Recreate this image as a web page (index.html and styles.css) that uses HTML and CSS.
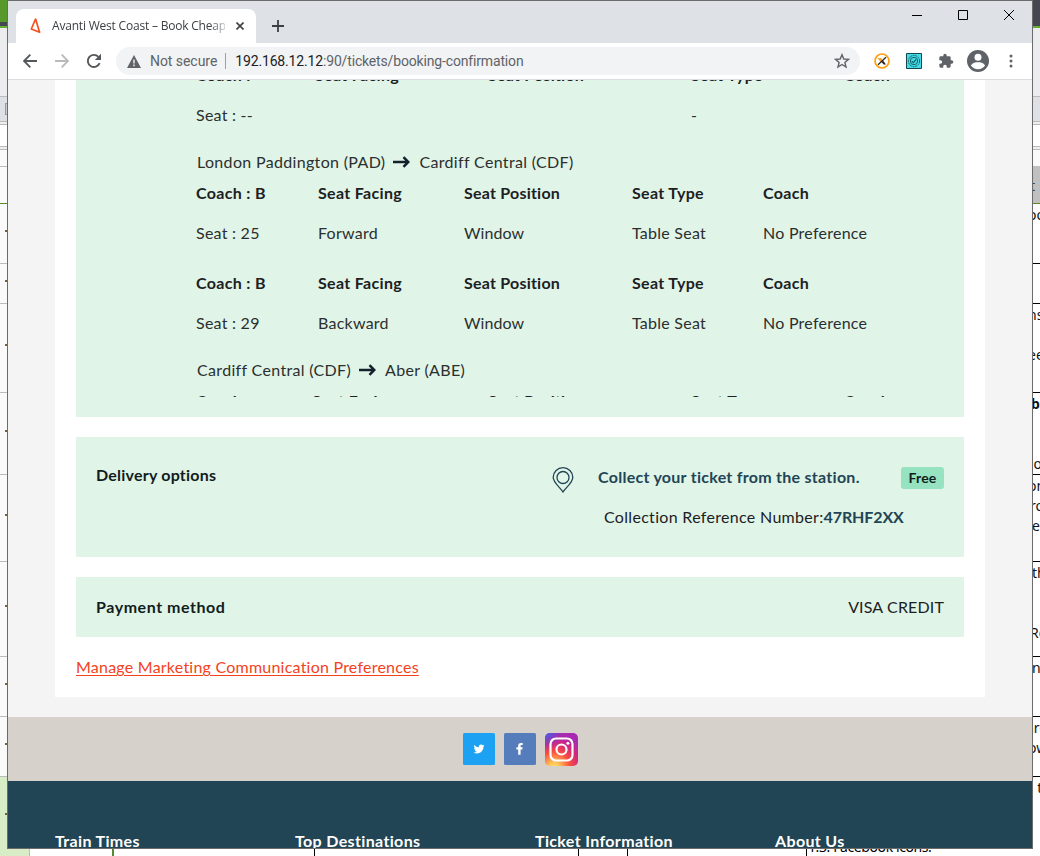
FILE: index.html
```
<!DOCTYPE html>
<html lang="en">
<head>
<meta charset="utf-8">
<title>Avanti West Coast – Booking confirmation</title>
<link rel="stylesheet" href="styles.css">
</head>
<body>
<div class="desktop">
  <div class="sheet">
    <div class="edge edge-left">
      <div class="ribbon"></div><div class="bar-dark"></div><div class="bar-green"></div><div class="ribbon-body"></div>
      <div class="formula"><i></i></div><div class="gap"></div><div class="white"></div><div class="gap2"></div><div class="colhead"></div>
      <div class="cell r1"></div><div class="cell r2"><b></b></div><div class="cell r3"><b></b></div><div class="cell r4"><b></b></div><div class="cell r5"><b></b></div><div class="cell r6"><b></b></div><div class="cell r7"><b></b></div><div class="cell r8"><b></b></div><div class="cell r9"><b></b></div><div class="cell r10"><b></b></div>
    </div>
    <div class="edge edge-right">
      <div class="ribbon"></div><div class="bar-dark"></div><div class="bar-green"></div><div class="ribbon-body"></div>
      <div class="formula"></div><div class="gap"></div><div class="white"></div><div class="gap2"></div><div class="colhead"></div>
      <div class="cell r1"><p>t</p></div>
      <div class="cell r2"><p>oo</p></div>
      <div class="cell r3"></div>
      <div class="cell r4"><p>ns</p><p></p><p>ee</p></div>
      <div class="cell r5"><p class="strong">ba</p><p></p><p></p><p class="io">io</p></div>
      <div class="cell r6"><p>on</p><p class="ro">ro</p><p class="in">e</p></div>
      <div class="cell r7"><p class="th">th</p><p></p><p></p><p class="re">Re</p></div>
      <div class="cell r8"><p class="in">n</p></div>
      <div class="cell r9"><p class="are">are</p><p>ow</p></div>
      <div class="cell r10"><p class="nt">n t</p></div>
    </div>
    <div class="bottom"><span class="c1"></span><span class="c2"></span><span class="c3"></span><span class="c4"></span><span class="c5"></span><span class="c6">1.3. Facebook icons.</span></div>
  </div>

  <div class="window">
    <div class="tabs">
      <div class="tab">
        <svg class="fav" viewBox="0 0 16 18"><path d="M6.6 2 2.3 12 10.6 15.2Z" fill="none" stroke="#f4511e" stroke-width="1.7" stroke-linejoin="round"/></svg>
        <span class="tab-title">Avanti West Coast – Book Cheap</span>
        <svg class="tab-x" viewBox="0 0 8 8"><path d="M.5.5 7.5 7.5M7.5.5.5 7.5" stroke="#3c4043" stroke-width="1.6"/></svg>
      </div>
      <svg class="plus" viewBox="0 0 12 12"><path d="M6 0V12M0 6H12" stroke="#3c4043" stroke-width="1.8"/></svg>
      <div class="controls">
        <svg width="10" height="11" viewBox="0 0 10 11"><path d="M0 5.5H10" stroke="#000"/></svg>
        <svg width="10" height="10" viewBox="0 0 10 10"><path d="M.5.5H9.5V9.5H.5Z" fill="none" stroke="#000"/></svg>
        <svg width="10" height="10" viewBox="0 0 10 10"><path d="M0 0 10 10M10 0 0 10" stroke="#000"/></svg>
      </div>
    </div>
    <div class="toolbar">
      <svg class="nav" viewBox="0 0 14 14"><path d="M14 7H1M7.3.7 1 7 7.3 13.3" fill="none" stroke="#54575b" stroke-width="1.9"/></svg>
      <svg class="nav" viewBox="0 0 14 14"><path d="M0 7H13M6.7.7 13 7 6.7 13.3" fill="none" stroke="#b8babc" stroke-width="1.9"/></svg>
      <svg class="nav reload" viewBox="0 0 16 16"><path d="M13.6 10.2A6.1 6.1 0 1 1 12.4 3.8" fill="none" stroke="#54575b" stroke-width="1.9"/><path d="M15 .8V7H8.8Z" fill="#54575b"/></svg>
      <div class="omnibox">
        <svg class="warn" viewBox="0 0 14 13"><path d="M7 0 14 13H0Z" fill="#5f6368"/><path d="M7 4.5V8.5M7 9.6V11.2" stroke="#f1f3f4" stroke-width="1.4"/></svg>
        <span class="secure">Not secure</span><span class="sep"></span><span class="url">192.168.12.12<em>:90/tickets/booking-confirmation</em></span>
        <svg class="star" viewBox="0 0 16 16"><path d="M8 1.7 9.8 6 14.4 6.4 10.9 9.4 12 14 8 11.5 4 14 5.1 9.4 1.6 6.4 6.2 6Z" fill="none" stroke="#5f6368" stroke-width="1.4"/></svg>
      </div>
      <svg class="ext e1" viewBox="0 0 16 16"><circle cx="8" cy="8" r="7" fill="#fff" stroke="#ff9f13" stroke-width="1.7"/><path d="M3.6 5H7.2L8.600 7.2 7 9.500 5.800 8Z" fill="#ffa01c"/><path d="M4 11.700 12 4.300" stroke="#222" stroke-width="1.200"/><path d="M7.500 9 9 7.600 12 11.500H9.700Z" fill="#222"/></svg>
      <svg class="ext e2" viewBox="0 0 16 16"><path d="M.5.5H15.5V15.5H.5Z" fill="#43dbe5" stroke="#17454b"/><g fill="none" stroke="#17636b"><circle cx="8" cy="8" r="5.6" stroke-dasharray="2 .7"/><circle cx="8" cy="8" r="3.7"/><path d="M5.8 8.2 7.3 9.7 10.2 6.5" stroke-width="1.2"/></g></svg>
      <svg class="ext e3" viewBox="0 0 24 24"><path fill="#5f6368" d="M20.5 11H19V7a2 2 0 0 0-2-2h-4V3.500a2.500 2.500 0 0 0-5 0V5H4a2 2 0 0 0-2 2v3.800h1.500a2.700 2.700 0 0 1 0 5.400H2V20a2 2 0 0 0 2 2h3.800v-1.500a2.700 2.700 0 0 1 5.400 0V22H17a2 2 0 0 0 2-2v-4h1.500a2.500 2.500 0 0 0 0-5Z"/></svg>
      <svg class="user" viewBox="0 0 22 22"><circle cx="11" cy="11" r="11" fill="#5f6368"/><circle cx="11" cy="7.200" r="3.500" fill="#fff"/><path d="M3.900 15.600C5.500 12.800 8.500 12.300 11 12.300S16.500 12.800 18.100 15.600A8.600 8.600 0 0 1 3.900 15.600Z" fill="#fff"/></svg>
      <svg class="dots" viewBox="0 0 4 14"><g fill="#5f6368"><circle cx="2" cy="2" r="1.500"/><circle cx="2" cy="7" r="1.500"/><circle cx="2" cy="12" r="1.500"/></g></svg>
    </div>

    <div class="page">
      <main class="container">
        <section class="card seats">
          <div class="scroller">
            <div class="grid wide first"><b>Coach :</b><b>Seat Facing</b><b>Seat Position</b><b>Seat Type</b><b>Coach</b><span>Seat : --</span><span></span><span></span><span>-</span><span></span></div>
            <h3>London Paddington (PAD)<svg viewBox="0 0 17 12"><path d="M0 6H15M10.500 1.200 15.300 6 10.500 10.800" fill="none" stroke="#14202c" stroke-width="2.500"/></svg>Cardiff Central (CDF)</h3>
            <div class="grid"><b>Coach : B</b><b>Seat Facing</b><b>Seat Position</b><b>Seat Type</b><b>Coach</b><span>Seat : 25</span><span>Forward</span><span>Window</span><span>Table Seat</span><span>No Preference</span></div>
            <div class="grid next"><b>Coach : B</b><b>Seat Facing</b><b>Seat Position</b><b>Seat Type</b><b>Coach</b><span>Seat : 29</span><span>Backward</span><span>Window</span><span>Table Seat</span><span>No Preference</span></div>
            <h3>Cardiff Central (CDF)<svg viewBox="0 0 17 12"><path d="M0 6H15M10.500 1.200 15.300 6 10.500 10.800" fill="none" stroke="#14202c" stroke-width="2.500"/></svg>Aber (ABE)</h3>
            <div class="grid wide last"><b>Coach :</b><b>Seat Facing</b><b>Seat Position</b><b>Seat Type</b><b>Coach</b></div>
          </div>
        </section>
        <section class="card delivery">
          <h2>Delivery options</h2>
          <div class="option">
            <div class="line"><svg class="pin" viewBox="0 0 22 26"><g fill="none" stroke="#214554" stroke-width="1.300"><path d="M11 25C8 20 1.200 16 1.200 10.300a9.800 9.600 0 0 1 19.600 0C20.800 16 14 20 11 25Z"/><circle cx="11" cy="10.500" r="6"/></g></svg><span class="collect">Collect your ticket from the station.</span><span class="badge">Free</span></div>
            <div class="ref">Collection Reference Number:<b>47RHF2XX</b></div>
          </div>
        </section>
        <section class="card payment"><h2>Payment method</h2><span>VISA CREDIT</span></section>
        <a class="manage" href="#">Manage Marketing Communication Preferences</a>
      </main>
      <div class="social">
        <svg viewBox="0 0 32 32"><rect width="32" height="32" rx="1.500" fill="#1da1f2"/><path transform="translate(10.500 10.500) scale(.46)" fill="#fff" d="M23.900 4.600a10 10 0 0 1-2.800.8 4.900 4.900 0 0 0 2.100-2.700c-1 .6-2 1-3.100 1.200a4.900 4.900 0 0 0-8.400 4.500A14 14 0 0 1 1.700 3.200a4.900 4.900 0 0 0 1.500 6.500 4.900 4.900 0 0 1-2.200-.6v.1a4.900 4.900 0 0 0 3.900 4.800 5 5 0 0 1-2.200.1 4.900 4.900 0 0 0 4.600 3.400A9.900 9.900 0 0 1 0 19.500a14 14 0 0 0 7.600 2.200c9 0 14-7.500 14-14v-.6a10 10 0 0 0 2.300-2.500Z"/></svg>
        <svg viewBox="0 0 32 32"><rect width="32" height="32" rx="1.500" fill="#557dbc"/><path fill="#fff" d="M14.200 21.800V16.600H12.400V14.300H14.200V12.800C14.200 11 15.300 10 16.900 10H18.700V12H17.500C16.800 12 16.600 12.400 16.600 12.900V14.300H18.600L18.300 16.600H16.600V21.800Z"/></svg>
        <svg class="insta" viewBox="0 0 33 33"><defs><radialGradient id="warm" cx=".28" cy="1.050" r="1"><stop offset="0" stop-color="#ffdc70"/><stop offset=".15" stop-color="#ffc858"/><stop offset=".48" stop-color="#fa4f3e"/><stop offset=".75" stop-color="#d4277c"/><stop offset="1" stop-color="#a92ab0"/></radialGradient><radialGradient id="cool" cx="0" cy="0" r=".55"><stop offset="0" stop-color="#3c69e8"/><stop offset="1" stop-color="#6a3fd0" stop-opacity="0"/></radialGradient></defs><rect width="33" height="33" rx="5" fill="url(#warm)"/><rect width="33" height="33" rx="5" fill="url(#cool)"/><g fill="none" stroke="#fff" stroke-width="2.200"><rect x="5.500" y="5.500" width="22" height="22" rx="5.500"/><circle cx="16.500" cy="16.500" r="5"/></g><circle cx="22.900" cy="10.200" r="1.500" fill="#fff"/></svg>
      </div>
      <footer><b>Train Times</b><b>Top Destinations</b><b>Ticket Information</b><b>About Us</b></footer>
    </div>
  </div>
</div>
</body>
</html>
```
FILE: styles.css
```
* { box-sizing: border-box; }
body { margin: 0; }
svg { display: block; flex: none; }
.desktop { position: relative; width: 1040px; height: 856px; overflow: hidden; background: #fff; }

/* spreadsheet behind the browser window */
.sheet { position: relative; display: flex; justify-content: space-between; height: 856px; }
.edge { width: 8px; height: 856px; overflow: hidden; }
.edge-left { background: #fafafa; }
.edge-left .ribbon { height: 22px; background: #57992b; }
.bar-dark { height: 4px; background: #44474f; }
.edge-right .ribbon { height: 22px; background: #44474f; }
.bar-green { height: 2px; background: #65b032; }
.ribbon-body { height: 68px; background: #ececef; }
.formula { height: 26px; background: #dfe0e6; border: solid #bbb; border-width: 1px 0; }
.formula i { display: block; width: 6px; height: 12px; margin: 6px 0 0 5px; background: #cfcfcf; border: 1px solid #999; }
.gap { height: 3px; background: #eee; border-bottom: 1px solid #bbb; }
.white { height: 22px; background: #fff; border-bottom: 1px solid #bbb; }
.gap2 { height: 3px; background: #eee; border-bottom: 1px solid #bbb; }
.colhead { height: 17px; background: #fafafa; border-bottom: 1px solid #bbb; }
.edge-right .colhead { border-bottom-color: #c0c0c0; }
.cell { border-bottom: 1px solid #bbb; overflow: hidden; }
.edge-right .cell { padding-top: 1px; border-color: #000; font: 14px/20px "Noto Sans", sans-serif; color: #111; white-space: nowrap; }
.cell p { height: 20px; margin: 0 0 0 -4px; }
.cell .strong { font-weight: 700; margin-left: -1px; }
.cell .in { margin-left: 0; }
.cell .io { margin-left: -2px; }
.cell .ro, .cell .are { margin-left: -2px; }
.cell .are { margin-left: -6px; }
.cell .re { margin-left: -2px; }
.cell .th { margin-left: 0; }
.cell .nt { margin-left: -7px; }
.edge .r1 { height: 37px; border-color: #558b2f; }
.edge-right .r1 { background: #c0c0c0; padding-top: 9px; color: #214a70; }
.edge-right .r1 p { margin-left: -2px; }
.r2 { height: 60px; }
.r3 { height: 40px; }
.r4 { height: 89px; }
.r5 { height: 82px; }
.r6 { height: 87px; }
.r7 { height: 95px; }
.r8 { height: 60px; }
.r9 { height: 60px; }
.edge .r10 { height: 80px; border: 0; }
.edge-left .r10 { background: #d8ecc6; }
.edge-left .cell { display: flex; align-items: center; justify-content: flex-end; }
.edge-left .cell b { width: 2px; height: 2px; background: #75603d; margin: -6px 1px 0 0; }

.bottom { position: absolute; left: 0; top: 848px; width: 1040px; height: 8px; display: flex; overflow: hidden; background: #fff; }
.bottom span { height: 8px; border-right: 1px solid #000; }
.bottom .c1 { width: 30px; background: #d8ecc6; border-color: #bbb; }
.bottom .c2 { width: 84px; border-right: 2px solid #558b2f; }
.bottom .c3 { width: 201px; }
.bottom .c4 { width: 264px; }
.bottom .c5 { width: 49px; }
.bottom .c6 { width: 412px; border: 0; padding-left: 180px; font: 14px/20px "Noto Sans", sans-serif; letter-spacing: -.4px; margin-top: -11px; height: 20px; background: linear-gradient(#000, #000) 178px 0 / 1px 20px no-repeat; }

/* browser window */
.window { position: absolute; left: 7px; top: 0; width: 1026px; height: 849px; border: 1px solid #6b6b6b; display: flex; flex-direction: column; background: #fff; overflow: hidden; }
.tabs { flex: none; height: 42px; background: #dee1e6; display: flex; padding: 8px 0 0 8px; }
.tab { width: 240px; height: 34px; background: #fff; border-radius: 8px 8px 0 0; display: flex; align-items: center; padding-left: 12px; }
.fav { width: 16px; height: 18px; margin-left: 1px; }
.tab-title { width: 173px; margin-left: 7px; font: 12px/16px "Open Sans", sans-serif; letter-spacing: -.2px; color: #3c4043; white-space: nowrap; overflow: hidden; -webkit-mask-image: linear-gradient(90deg, #000 158px, transparent 178px); mask-image: linear-gradient(90deg, #000 158px, transparent 178px); }
.tab-x { width: 8px; height: 8px; margin-left: 11px; }
.plus { width: 12px; height: 12px; margin: 11px 0 0 16px; }
.controls { display: flex; gap: 36px; margin: 1px 18px 0 auto; }
.toolbar { flex: none; height: 37px; border-bottom: 1px solid #dadce0; display: flex; align-items: center; padding-left: 15px; }
.nav { width: 14px; height: 14px; margin-right: 18px; }
.toolbar .reload { width: 16px; height: 16px; margin: 0 14px 0 -1px; }
.omnibox { width: 744px; height: 28px; border-radius: 14px; background: #f1f3f4; display: flex; align-items: center; padding: 0 10px 0 11px; font: 14px/20px Roboto, sans-serif; color: #5f6368; white-space: nowrap; }
.warn { width: 14px; height: 13px; }
.secure { margin-left: 9px; letter-spacing: -.05px; }
.sep { width: 1px; height: 16px; background: #9aa0a6; margin: 0 9px 0 8px; }
.url { color: #202124; letter-spacing: -.16px; }
.url em { font-style: normal; color: #5f6368; }
.star { width: 16px; height: 16px; margin-left: auto; }
.ext { width: 16px; height: 16px; }
.e1 { margin-left: 14px; }
.e2, .e3 { margin-left: 16px; }
.user { width: 22px; height: 22px; margin-left: 13px; }
.dots { width: 4px; height: 14px; margin-left: 20px; }

/* booking page */
.page { flex: none; height: 768px; background: #f4f4f4; overflow: hidden; font: 16px/22px Lato, sans-serif; font-variant-ligatures: none; color: #2b2f2e; }
.container { width: 930px; height: 617px; margin: 0 auto 20px 47px; padding: 0 21px; background: #fff; }
.card { background: #e1f4e8; margin-bottom: 20px; }
.seats { height: 337px; padding: 0 20px 20px 120px; }
.scroller { height: 317px; overflow: hidden; }
.grid { display: grid; grid-template-columns: 122px 146px 168px 131px 1fr; grid-auto-rows: 40px; align-items: center; white-space: nowrap; letter-spacing: .25px; }
.grid b { color: #1c211f; letter-spacing: .33px; }
.grid b:nth-child(3) { letter-spacing: .22px; }
.grid span:nth-child(8) { letter-spacing: .05px; }
.wide { grid-template-columns: 119px 173px 203px 153px 1fr; }
.first { margin-top: -25px; }
.last { grid-template-columns: 116px 176px 203px 153px 1fr; }
.next { margin-top: 10px; }
.seats h3 { margin: 16px 0 0 1px; height: 22px; font-size: 16px; font-weight: 400; letter-spacing: .33px; display: flex; align-items: center; }
.seats h3 svg { width: 17px; height: 12px; margin: 0 9px 0 8px; }
.card h2 { margin: 0; font-size: 16px; line-height: 22px; letter-spacing: .22px; color: #111d1c; }
.delivery { height: 120px; display: flex; padding: 27px 20px 0; justify-content: space-between; }
.option { width: 392px; padding-top: 1px; }
.line { display: flex; align-items: center; height: 26px; }
.pin { width: 22px; height: 26px; margin-top: 4px; }
.collect { margin: -2px 0 0 24px; font-weight: 700; letter-spacing: .27px; color: #214554; white-space: nowrap; }
.badge { margin-left: auto; width: 43px; height: 22px; border-radius: 3px; background: #96e2c1; font-size: 14px; line-height: 22px; font-weight: 700; letter-spacing: .2px; color: #111d1c; text-align: center; }
.ref { margin: 15px 0 0 52px; color: #1c211f; white-space: nowrap; letter-spacing: .31px; }
.ref b { color: #214554; letter-spacing: -.1px; }
.payment { height: 60px; display: flex; align-items: center; justify-content: space-between; padding: 0 20px; color: #1c211f; letter-spacing: .15px; }
.payment h2 { letter-spacing: .55px; }
.manage { display: block; width: max-content; margin-top: -1px; color: #f4421d; white-space: nowrap; letter-spacing: .23px; text-decoration: underline; text-underline-offset: 2px; }
.social { height: 64px; background: #d6d1ca; display: flex; align-items: center; justify-content: center; gap: 9px; }
.social svg { width: 32px; height: 32px; }
.social .insta { width: 33px; height: 33px; }
footer { height: 80px; background: #214554; color: #fff; padding: 49px 0 0 47px; display: grid; grid-template-columns: repeat(4, 240px); letter-spacing: .35px; }
```
